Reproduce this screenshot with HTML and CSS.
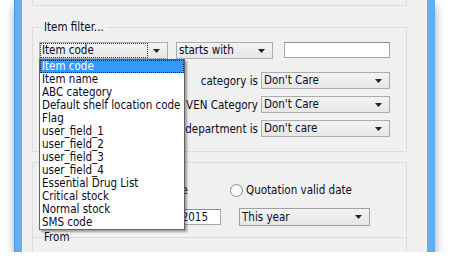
FILE: index.html
```html
<!DOCTYPE html>
<html lang="en">
<head>
    <meta charset="UTF-8">
    <meta name="viewport" content="width=device-width, initial-scale=1.0">
    <title>Item filter</title>
    <link rel="stylesheet" href="styles.css">
</head>
<body>
    <div class="window">
        <div class="stub"></div>
        <fieldset class="group filter">
            <legend>Item filter...</legend>
            <div class="first-row">
                <div class="combo code">
                    <span class="value focus">Item code</span>
                    <svg class="arrow" width="7" height="4" viewBox="0 0 7 4"><path d="M0 0h7L3.5 4z"/></svg>
                    <ul class="list">
                        <li class="selected">Item code</li>
                        <li>Item name</li>
                        <li>ABC category</li>
                        <li>Default shelf location code</li>
                        <li>Flag</li>
                        <li>user_field_1</li>
                        <li>user_field_2</li>
                        <li>user_field_3</li>
                        <li>user_field_4</li>
                        <li>Essential Drug List</li>
                        <li>Critical stock</li>
                        <li>Normal stock</li>
                        <li>SMS code</li>
                    </ul>
                </div>
                <div class="combo op">
                    <span class="value">starts with</span>
                    <svg class="arrow" width="7" height="4" viewBox="0 0 7 4"><path d="M0 0h7L3.5 4z"/></svg>
                </div>
                <div class="textbox"></div>
            </div>
            <div class="field">
                <span class="label">category is</span>
                <div class="combo">
                    <span class="value">Don't Care</span>
                    <svg class="arrow" width="7" height="4" viewBox="0 0 7 4"><path d="M0 0h7L3.5 4z"/></svg>
                </div>
            </div>
            <div class="field">
                <span class="label">VEN Category</span>
                <div class="combo">
                    <span class="value">Don't Care</span>
                    <svg class="arrow" width="7" height="4" viewBox="0 0 7 4"><path d="M0 0h7L3.5 4z"/></svg>
                </div>
            </div>
            <div class="field">
                <span class="label">department is</span>
                <div class="combo">
                    <span class="value">Don't care</span>
                    <svg class="arrow" width="7" height="4" viewBox="0 0 7 4"><path d="M0 0h7L3.5 4z"/></svg>
                </div>
            </div>
        </fieldset>
        <fieldset class="group dates">
            <div class="date-grid">
                <label class="radio entry"><span class="dot"></span>date</label>
                <label class="radio"><span class="dot"></span>Quotation valid date</label>
                <div class="textbox date">2015</div>
                <div class="combo period">
                    <span class="value">This year</span>
                    <svg class="arrow" width="7" height="4" viewBox="0 0 7 4"><path d="M0 0h7L3.5 4z"/></svg>
                </div>
            </div>
        </fieldset>
        <fieldset class="group from">
            <legend>From</legend>
        </fieldset>
    </div>
</body>
</html>
```

FILE: styles.css
```css
* {
    box-sizing: border-box;
    padding: 0;
    margin: 0;
}

:root {
    --panel: #f0f0f0;
    --frame: #63adf5;
    --frame-edge: #4a95e0;
    --group-line: #dcdcdc;
    --combo-line: #acacac;
    --text: #0a0a1e;
    --highlight: #3399ff;
}

body {
    background-color: white;
    font-family: "DejaVu Sans Condensed", "DejaVu Sans", sans-serif;
    font-stretch: condensed;
    font-size: 11.5px;
    color: var(--text);
}

.window {
    margin-left: 15px;
    width: 420px;
    height: 252px;
    padding: 0 20px 0 10px;
    background-color: var(--panel);
    border-left: 7px solid var(--frame);
    border-right: 8px solid var(--frame);
    box-shadow: -1px 0 0 var(--frame-edge), 0 6px 10px rgba(0, 0, 0, 0.38);
    overflow: hidden;
}

.stub {
    height: 6px;
    border: 1px solid var(--group-line);
    border-top: none;
}

.group {
    border: 1px solid var(--group-line);
    padding: 0 16px 0 6px;
    min-inline-size: 0;
}

.group legend {
    line-height: 14px;
    padding: 0 2px;
    margin-left: 3px;
}

.filter {
    margin-top: 14px;
    padding-bottom: 14px;
}

.first-row {
    display: flex;
    margin-top: 8px;
    margin-bottom: 13px;
}

.combo {
    display: flex;
    align-items: center;
    height: 17px;
    border: 1px solid var(--combo-line);
    background: linear-gradient(#f3f3f3, #e6e6e6);
    position: relative;
}

.combo .value {
    flex: 1;
    padding-left: 2px;
    line-height: 13px;
    white-space: nowrap;
}

.combo .arrow {
    margin: 0 7px 0 6px;
    fill: #222;
}

.combo.code {
    width: 129px;
    margin-right: 8px;
}

.combo.code .value {
    outline: 1px dotted #333;
    outline-offset: 0;
    margin: 1px 0 1px 1px;
    padding-left: 1px;
}

.combo.op {
    width: 97px;
    margin-right: 11px;
}

.textbox {
    height: 16px;
    width: 106px;
    border: 1px solid #a8a8a8;
    border-top-color: #8c8c8c;
    background-color: white;
}

.list {
    position: absolute;
    top: 16px;
    left: -1px;
    width: 146px;
    list-style: none;
    background-color: white;
    border: 1px solid #646464;
    box-shadow: 2px 2px 2px rgba(0, 0, 0, 0.35);
    z-index: 2;
}

.list li {
    height: 13px;
    line-height: 12px;
    padding-left: 2px;
    white-space: nowrap;
}

.list li.selected {
    background-color: var(--highlight);
    color: white;
    outline: 1px dotted #222;
    outline-offset: -1px;
}

.field {
    display: grid;
    grid-template-columns: 1fr 129px;
    column-gap: 3px;
    align-items: center;
    margin-bottom: 7px;
}

.field:last-child {
    margin-bottom: 0;
}

.label {
    justify-self: end;
    white-space: nowrap;
}

.dates {
    margin-top: 10px;
    padding-bottom: 11px;
}

.date-grid {
    display: grid;
    grid-template-columns: 1fr 160px;
    column-gap: 9px;
    row-gap: 10px;
    align-items: center;
    margin-top: 19px;
}

.radio {
    display: flex;
    align-items: center;
    height: 16px;
    white-space: nowrap;
}

.radio.entry {
    justify-self: end;
    margin-right: 33px;
}

.dot {
    width: 13px;
    height: 13px;
    border-radius: 50%;
    border: 1px solid #8a8a8a;
    background: linear-gradient(#f4f4f4, #ffffff);
    margin-right: 3px;
}

.textbox.date {
    justify-self: end;
    width: 76px;
    line-height: 14px;
    padding-right: 12px;
    text-align: right;
}

.combo.period {
    width: 131px;
    height: 18px;
    margin-left: 9px;
    border-color: #a0a0a0;
}

.from {
    margin-top: -8px;
    height: 40px;
}
```
